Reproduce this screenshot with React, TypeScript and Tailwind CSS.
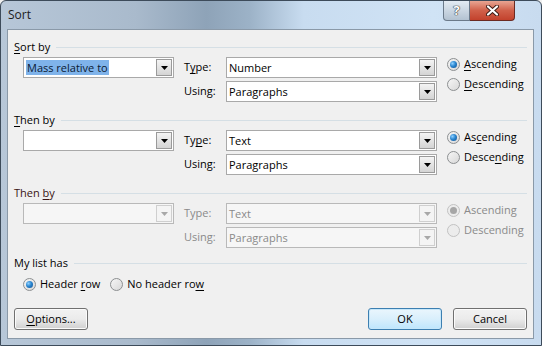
import React from "react";

function U({ children }: { children: React.ReactNode }) {
  return <span className="underline decoration-1 underline-offset-[2px]">{children}</span>;
}

function Arrow({ disabled }: { disabled?: boolean }) {
  return (
    <svg width="7" height="4" viewBox="0 0 7 4">
      <path d="M0 0h7L3.5 4z" fill={disabled ? "#a8a8a8" : "#000"} />
    </svg>
  );
}

function Combo({
  value,
  className,
  selected,
  disabled,
}: {
  value: string;
  className: string;
  selected?: boolean;
  disabled?: boolean;
}) {
  return (
    <div
      className={`flex h-[21px] items-center border ${
        disabled ? "border-[#b9b9b9] bg-[#f6f6f6] text-[#8a8a8a]" : "border-[#a9a9a9] bg-white text-black"
      } ${className}`}
    >
      <div className="flex-1 pl-[2px] leading-[15px]">
        {selected ? <span className="bg-[#7fb3ea] px-[1px] text-[#0b1a33]">{value}</span> : value}
      </div>
      <div
        className={`mr-[1px] flex h-[17px] w-[16px] items-center justify-center border ${
          disabled
            ? "border-[#cfcfcf] bg-[#f4f4f4]"
            : "border-[#9a9a9a] bg-gradient-to-b from-[#f4f4f4] to-[#d4d4d4]"
        }`}
      >
        <Arrow disabled={disabled} />
      </div>
    </div>
  );
}

function Radio({ checked, disabled }: { checked?: boolean; disabled?: boolean }) {
  return (
    <span
      className={`flex h-[13px] w-[13px] shrink-0 items-center justify-center rounded-full border ${
        disabled
          ? "border-[#c2c2c2] bg-[#ececec]"
          : "border-[#8c8f91] bg-gradient-to-br from-[#f6f6f6] to-[#d8d8d8]"
      }`}
    >
      {checked && (
        <span
          className={`h-[7px] w-[7px] rounded-full ${
            disabled
              ? "bg-[#a6a6a6]"
              : "bg-[radial-gradient(circle_at_35%_35%,#8ed0ff_0%,#2a86d0_45%,#0e4d8e_100%)]"
          }`}
        />
      )}
    </span>
  );
}

function RadioLabel({
  checked,
  disabled,
  children,
}: {
  checked?: boolean;
  disabled?: boolean;
  children: React.ReactNode;
}) {
  return (
    <div className={`flex h-[14px] items-center gap-[4px] ${disabled ? "text-[#8a8a8a]" : "text-black"}`}>
      <Radio checked={checked} disabled={disabled} />
      <span className="leading-[14px]">{children}</span>
    </div>
  );
}

function Header({ children, className = "" }: { children: React.ReactNode; className?: string }) {
  return (
    <div className={`flex h-[14px] items-center gap-[6px] ${className}`}>
      <span className="leading-[14px]">{children}</span>
      <div className="h-px flex-1 bg-[#d5dfe5]" />
    </div>
  );
}

function SortBlock({
  field,
  type,
  typeLabel,
  asc,
  desc,
  selected,
  disabled,
}: {
  field: string;
  type: string;
  typeLabel: React.ReactNode;
  asc: React.ReactNode;
  desc: React.ReactNode;
  selected?: boolean;
  disabled?: boolean;
}) {
  const lbl = disabled ? "text-[#8a8a8a]" : "text-black";
  return (
    <div className="ml-[9px] mt-[3px] flex">
      <Combo value={field} className="w-[151px]" selected={selected} disabled={disabled} />
      <div className="ml-[10px] flex flex-col gap-[3px]">
        <div className="flex items-center">
          <span className={`w-[42px] ${lbl}`}>{typeLabel}</span>
          <Combo value={type} className="w-[211px]" disabled={disabled} />
        </div>
        <div className="flex items-center">
          <span className={`w-[42px] ${lbl}`}>Using:</span>
          <Combo value="Paragraphs" className="w-[211px]" disabled={disabled} />
        </div>
      </div>
      <div className="ml-[10px] flex flex-col gap-[6px]">
        <RadioLabel checked disabled={disabled}>
          {asc}
        </RadioLabel>
        <RadioLabel disabled={disabled}>{desc}</RadioLabel>
      </div>
    </div>
  );
}

function Button({ children, primary }: { children: React.ReactNode; primary?: boolean }) {
  return (
    <div
      className={`flex h-[22px] w-[74px] items-center justify-center rounded-[3px] border ${
        primary
          ? "border-[#3c7fb1] bg-gradient-to-b from-[#eaf6fd] via-[#d9effc] to-[#bee6fd] shadow-[inset_0_0_0_1px_#c6e7fa]"
          : "border-[#707070] bg-gradient-to-b from-[#f2f2f2] via-[#ebebeb] to-[#d0d0d0] shadow-[inset_0_0_0_1px_#fbfbfb]"
      }`}
    >
      {children}
    </div>
  );
}

export default function App() {
  return (
    <div className="h-[346px] w-[542px] overflow-hidden bg-[#f0f0f0] font-['Open_Sans',sans-serif] text-[11px] text-black">
      <div className="flex h-full w-full flex-col rounded-t-[6px] border border-[#3d4b5a] bg-[linear-gradient(90deg,#b7c7d8_0%,#a9bacc_25%,#8ea3b8_38%,#9cb2c7_46%,#c8dcf0_56%,#d0e3f5_80%,#c8dbef_100%)]">
        {/* Title bar */}
        <div className="flex h-[28px] shrink-0 items-start justify-between">
          <span className="ml-[7px] mt-[6px] text-[12px] leading-[16px] text-[#1b1b1b]">Sort</span>
          <div className="mr-[26px] flex">
            <div className="flex h-[20px] w-[27px] items-center justify-center rounded-bl-[4px] border border-t-0 border-[#6b7a8a] bg-gradient-to-b from-[#e3ebf3] to-[#b3c2d1] text-[13px] font-bold text-white [text-shadow:0_0_1px_#333,0_0_1px_#333,0_0_1px_#333]">
              ?
            </div>
            <div className="flex h-[20px] w-[45px] items-center justify-center rounded-br-[4px] border border-l-0 border-t-0 border-[#6b2a22] bg-gradient-to-b from-[#e8a593] via-[#d0604a] to-[#c2412c]">
              <svg width="13" height="11" viewBox="0 0 13 11">
                <path d="M2 1.5l9 8M11 1.5l-9 8" stroke="#3a1a14" strokeWidth="4" strokeLinecap="round" />
                <path d="M2 1.5l9 8M11 1.5l-9 8" stroke="#fff" strokeWidth="2.2" strokeLinecap="round" />
              </svg>
            </div>
          </div>
        </div>

        {/* Client area */}
        <div className="ml-[6px] mr-[7px] h-[310px] shrink-0 border border-[#8a99a8] bg-[#f0f0f0] px-[6px] pt-[10px]">
          <Header>
            <U>S</U>ort by
          </Header>
          <SortBlock
            field="Mass relative to"
            selected
            type="Number"
            typeLabel={
              <>
                T<U>y</U>pe:
              </>
            }
            asc={
              <>
                <U>A</U>scending
              </>
            }
            desc={
              <>
                <U>D</U>escending
              </>
            }
          />

          <Header className="mt-[11px]">
            <U>T</U>hen by
          </Header>
          <SortBlock
            field=""
            type="Text"
            typeLabel={
              <>
                Ty<U>p</U>e:
              </>
            }
            asc={
              <>
                As<U>c</U>ending
              </>
            }
            desc={
              <>
                Desce<U>n</U>ding
              </>
            }
          />

          <Header className="mt-[11px] text-[#3a1414]">
            Then <U>b</U>y
          </Header>
          <SortBlock field="" type="Text" typeLabel="Type:" asc="Ascending" desc="Descending" disabled />

          <Header className="mt-[8px]">My list has</Header>
          <div className="ml-[9px] mt-[7px] flex gap-[10px]">
            <RadioLabel checked>
              Header <U>r</U>ow
            </RadioLabel>
            <RadioLabel>
              No header ro<U>w</U>
            </RadioLabel>
          </div>

          <div className="mt-[17px] flex justify-between">
            <Button>
              <span>
                <U>O</U>ptions...
              </span>
            </Button>
            <div className="flex gap-[11px]">
              <Button primary>OK</Button>
              <Button>Cancel</Button>
            </div>
          </div>
        </div>
      </div>
    </div>
  );
}
